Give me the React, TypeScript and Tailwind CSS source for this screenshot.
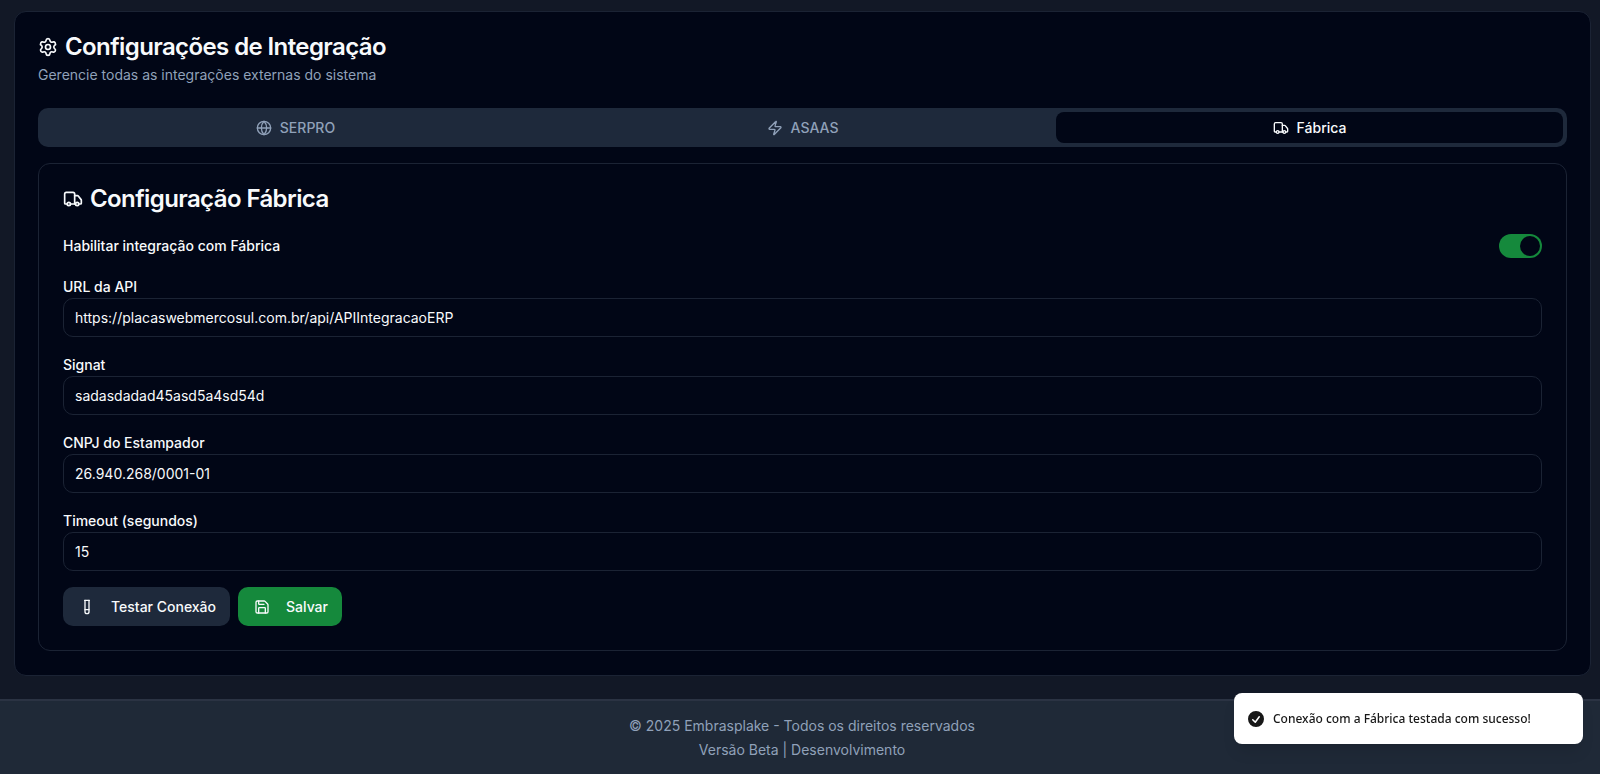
import { useState } from "react";
import { Globe, Save, Settings, Truck, Zap } from "lucide-react";

type Tab = "serpro" | "asaas" | "fabrica";

const tabs: { id: Tab; label: string; icon: typeof Globe }[] = [
  { id: "serpro", label: "SERPRO", icon: Globe },
  { id: "asaas", label: "ASAAS", icon: Zap },
  { id: "fabrica", label: "Fábrica", icon: Truck },
];

function TubeIcon({ className }: { className?: string }) {
  return (
    <svg className={className} viewBox="0 0 24 24" fill="none" stroke="currentColor" strokeWidth="2" strokeLinecap="round" strokeLinejoin="round" aria-hidden="true">
      <path d="M15 2v17a3 3 0 0 1-6 0V2" />
      <path d="M8.500 2h7" />
      <path d="M15 16H9" />
    </svg>
  );
}

function Field({ id, label, type = "text", value }: { id: string; label: string; type?: string; value: string }) {
  return (
    <div className="flex flex-col">
      <label htmlFor={id} className="flex h-[23px] items-center text-sm font-medium">
        {label}
      </label>
      <input
        id={id}
        type={type}
        defaultValue={value}
        className="h-[39px] w-full rounded-[10px] border border-[#1b2334] bg-transparent px-[11px] text-sm outline-none focus-visible:border-slate-500"
      />
    </div>
  );
}

export default function App() {
  const [active, setActive] = useState<Tab>("fabrica");
  const [enabled, setEnabled] = useState(true);

  return (
    <div className="flex min-h-screen flex-col bg-[#121826] font-['Inter',sans-serif] text-slate-50">
      <main className="grow pt-[11px] pr-[9px] pb-[23px] pl-3.5">
        <section className="rounded-xl border border-[#1b2334] bg-[#010616] px-[23px] pt-[19px] pb-6">
          <header>
            <h1 className="flex h-8 items-center gap-[7px] text-2xl font-semibold tracking-tight">
              <Settings className="size-5" />
              Configurações de Integração
            </h1>
            <p className="mt-0.5 text-sm leading-5 text-slate-400">Gerencie todas as integrações externas do sistema</p>
          </header>

          <div role="tablist" className="mt-[23px] grid h-[39px] grid-cols-3 rounded-[10px] bg-[#1e293b] p-1 text-slate-400">
            {tabs.map(({ id, label, icon: Icon }) => (
              <button
                key={id}
                type="button"
                role="tab"
                aria-selected={active === id}
                onClick={() => setActive(id)}
                className={
                  active === id
                    ? "flex items-center justify-center gap-2 rounded-lg bg-[#010616] text-sm font-medium text-slate-50"
                    : "flex items-center justify-center gap-2 rounded-lg text-sm font-medium"
                }
              >
                <Icon className="size-4" />
                {label}
              </button>
            ))}
          </div>

          <div role="tabpanel" className="mt-4 rounded-xl border border-[#1b2334] px-6 pt-[19px] pb-6">
            <h2 className="flex h-8 items-center gap-[7px] text-2xl font-semibold tracking-tight">
              <Truck className="size-5" />
              Configuração Fábrica
            </h2>

            <div className="mt-[19px] flex h-6 items-center justify-between">
              <label htmlFor="enabled" className="text-sm font-medium">
                Habilitar integração com Fábrica
              </label>
              <span className="relative flex h-6 w-[43px]">
                <input
                  id="enabled"
                  type="checkbox"
                  role="switch"
                  checked={enabled}
                  onChange={(e) => setEnabled(e.target.checked)}
                  className="peer h-full w-full cursor-pointer appearance-none rounded-full bg-slate-700 checked:bg-[#15893c]"
                />
                <span className="pointer-events-none absolute top-0.5 left-0.5 size-5 rounded-full bg-[#010616] peer-checked:left-[21px]" />
              </span>
            </div>

            <form className="mt-[17px] flex flex-col gap-4" onSubmit={(e) => e.preventDefault()}>
              <Field id="url" label="URL da API" value="https://placaswebmercosul.com.br/api/APIIntegracaoERP" />
              <Field id="signat" label="Signat" value="sadasdadad45asd5a4sd54d" />
              <Field id="cnpj" label="CNPJ do Estampador" value="26.940.268/0001-01" />
              <Field id="timeout" label="Timeout (segundos)" value="15" />
              <div className="flex gap-2">
                <button type="button" className="flex h-[39px] items-center gap-4 rounded-[10px] bg-[#1e293b] pr-3.5 pl-4 text-sm font-medium">
                  <TubeIcon className="size-4" />
                  Testar Conexão
                </button>
                <button type="submit" className="flex h-[39px] items-center gap-4 rounded-[10px] bg-[#15893c] pr-3.5 pl-4 text-sm font-medium">
                  <Save className="size-4" />
                  Salvar
                </button>
              </div>
            </form>
          </div>
        </section>
      </main>

      <footer className="border-t-2 border-[#2b3343] bg-[#1f2937] pt-[13px] pb-3 pl-1 text-center text-sm leading-6 text-slate-400">
        <p>© 2025 Embrasplake - Todos os direitos reservados</p>
        <p>Versão Beta | Desenvolvimento</p>
      </footer>

      <div
        role="status"
        className="fixed right-[17px] bottom-[30px] flex h-[51px] w-[349px] items-center gap-[7px] rounded-lg bg-white px-3 font-['Noto_Sans',sans-serif] text-xs font-medium text-[#171717] shadow-lg"
      >
        <svg viewBox="0 0 20 20" fill="currentColor" className="size-5 shrink-0" aria-hidden="true">
          <path fillRule="evenodd" clipRule="evenodd" d="M10 18a8 8 0 100-16 8 8 0 000 16zm3.857-9.809a.75.75 0 00-1.214-.882l-3.483 4.790-1.880-1.880a.75.75 0 10-1.060 1.061l2.500 2.500a.75.75 0 001.137-.089l4-5.500z" />
        </svg>
        Conexão com a Fábrica testada com sucesso!
      </div>
    </div>
  );
}
